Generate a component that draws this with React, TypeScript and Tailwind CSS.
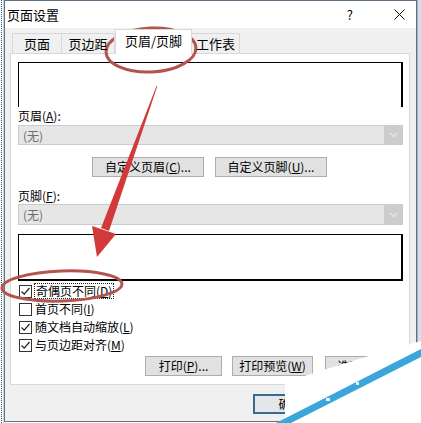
import React, { ReactNode } from "react";

const Check = () => (
	<svg width="11" height="11" viewBox="0 0 11 11">
		<path d="M1.5 5.5 L4.2 8.2 L9.5 2" fill="none" stroke="#222" strokeWidth="1.2" />
	</svg>
);

const CheckRow = ({ checked, children, focused }: { checked: boolean; children: ReactNode; focused?: boolean }) => (
	<div className="flex h-[18px] items-center pl-[1px]">
		<div className="flex size-[13px] items-center justify-center border border-[#333] bg-white">
			{checked && <Check />}
		</div>
		<span
			className={
				focused
					? "ml-[2px] border border-dotted border-[#222] px-[1px] leading-[14px]"
					: "ml-[3px] leading-[14px]"
			}
		>
			{children}
		</span>
	</div>
);

const Btn = ({ w, children }: { w: string; children: ReactNode }) => (
	<div className={`${w} flex h-[20px] items-center justify-center border border-[#adadad] bg-[#e1e1e1]`}>
		{children}
	</div>
);

const Dropdown = ({ h }: { h: string }) => (
	<div className={`${h} flex w-[385px] border border-[#cbcbcb] bg-[#e6e6e6]`}>
		<span className="flex-1 pl-[4px] leading-[19px] text-[#6d6d6d]">(无)</span>
		<div className="flex w-[18px] items-center justify-center bg-[#cdcdcd]">
			<svg width="9" height="6" viewBox="0 0 9 6">
				<path d="M1 1 L4.5 4.5 L8 1" fill="none" stroke="#e8e8e8" strokeWidth="1.2" />
			</svg>
		</div>
	</div>
);

export default function App() {
	return (
		<div className="relative flex h-[423px] w-[421px] overflow-hidden bg-white font-['Noto_Sans_CJK_SC','Noto_Sans',sans-serif] text-[12px] text-black">
			{/* excel sheet behind the dialog */}
			<div className="w-[4px] border-r border-[#c9d3dc] bg-white">
				<div className="ml-[1px] h-full border-l border-dotted border-[#2d4a66]" />
			</div>

			<div className="flex h-[422px] w-[413px] flex-col border border-[#5f7183] bg-[#f0f0f0]">
				<div className="flex h-[27px] items-center bg-white pl-[2px]">
					<span className="text-[13px]">页面设置</span>
					<span className="ml-auto mr-[41px] text-[13px]">?</span>
					<svg width="11" height="11" viewBox="0 0 11 11" className="mr-[11px]">
						<path d="M0.5 0.5 L10.5 10.5 M10.5 0.5 L0.5 10.5" stroke="#111" strokeWidth="1" />
					</svg>
				</div>

				{/* tabs */}
				<div className="relative z-10 -mb-[1px] ml-[7px] flex h-[26px] items-end">
					<div className="flex h-[21px] w-[50px] items-center justify-center border border-b-0 border-[#d9d9d9] text-[13px]">页面</div>
					<div className="flex h-[21px] w-[53px] items-center justify-center border-y border-r border-b-0 border-[#d9d9d9] text-[13px]">页边距</div>
					<div className="flex h-[25px] w-[77px] items-center justify-center border border-b-0 border-[#d9d9d9] bg-white pb-[2px] text-[13px]">页眉/页脚</div>
					<div className="flex h-[21px] w-[48px] items-center justify-center border border-b-0 border-l-0 border-[#d9d9d9] text-[13px]">工作表</div>
				</div>

				{/* panel */}
				<div className="ml-[5px] flex h-[332px] w-[400px] flex-col border border-[#d9d9d9] bg-white pl-[7px] pt-[8px]">
					<div className="h-[45px] w-[385px] border-l border-t border-r-2 border-black" />
					<div className="mt-[1px] leading-[16px]">
						页眉(<u>A</u>):
					</div>
					<div className="mt-[1px]">
						<Dropdown h="h-[20px]" />
					</div>
					<div className="ml-[74px] mt-[12px] flex gap-[11px]">
						<Btn w="w-[112px]">
							自定义页眉(<u>C</u>)...
						</Btn>
						<Btn w="w-[112px]">
							自定义页脚(<u>U</u>)...
						</Btn>
					</div>
					<div className="mt-[11px] leading-[16px]">
						页脚(<u>F</u>):
					</div>
					<Dropdown h="h-[21px]" />
					<div className="mt-[9px] h-[47px] w-[385px] border-l border-t border-r-2 border-b-2 border-black" />
					<div className="mt-[1px] flex flex-col">
						<CheckRow checked focused>
							奇偶页不同(<u>D</u>)
						</CheckRow>
						<CheckRow checked={false}>
							首页不同(<u>I</u>)
						</CheckRow>
						<CheckRow checked>
							随文档自动缩放(<u>L</u>)
						</CheckRow>
						<CheckRow checked>
							与页边距对齐(<u>M</u>)
						</CheckRow>
					</div>
					<div className="ml-[127px] mt-[2px] flex">
						<Btn w="w-[77px]">
							打印(<u>P</u>)...
						</Btn>
						<div className="ml-[10px]">
							<Btn w="w-[81px]">
								打印预览(<u>W</u>)
							</Btn>
						</div>
						<div className="ml-[12px]">
							<Btn w="w-[76px]">
								选项(<u>O</u>)...
							</Btn>
						</div>
					</div>
				</div>

				<div className="ml-[248px] mt-[9px] flex gap-[10px]">
					<div className="flex h-[20px] w-[75px] items-center justify-center border-2 border-[#3a6a8e] bg-[#e3e7ec]">确定</div>
					<div className="flex h-[20px] w-[75px] items-center justify-center border border-[#adadad] bg-[#e1e1e1]">取消</div>
				</div>
			</div>

			<div className="w-[4px] border-l border-[#9fb0c0] bg-[#d5e0ea]" />

			{/* annotations and watermark drawn over the screenshot */}
			<svg className="pointer-events-none absolute left-0 top-0" width="421" height="423" viewBox="0 0 421 423">
				<defs>
					<linearGradient id="curl" x1="0" y1="0" x2="1" y2="0.4">
						<stop offset="0" stopColor="#ffffff" stopOpacity="0.85" />
						<stop offset="0.3" stopColor="#ffffff" stopOpacity="1" />
					</linearGradient>
				</defs>
				<ellipse cx="151" cy="50" rx="45" ry="22" fill="none" stroke="#b4554d" strokeWidth="3" transform="rotate(-3 151 50)" />
				<path d="M156.5 86 L157.3 86.3 L109 231 L101 228 Z" fill="#d23a3a" />
				<path d="M92 226 L116 234 L97 257 Z" fill="#d23a3a" />
				<ellipse cx="62" cy="286" rx="60" ry="15" fill="none" stroke="#b4554d" strokeWidth="3" transform="rotate(-2 62 286)" />

				<path d="M285 423 L285 382 L372 355 L421 341 L421 423 Z" fill="url(#curl)" />
				<path d="M276 423 L421 349 L421 357 L291 423 Z" fill="#3aa6dc" />
				<rect x="326" y="398" width="4" height="3" fill="#e8f5fc" />
				<rect x="356" y="382" width="3" height="3" fill="#e8f5fc" />
			</svg>
		</div>
	);
}
